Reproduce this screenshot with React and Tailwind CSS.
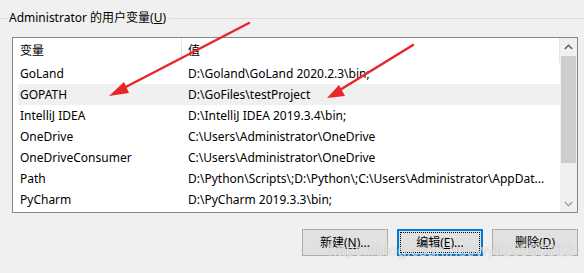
import React from "react";

const rows = [
  ["GoLand", "D:\\Goland\\GoLand 2020.2.3\\bin;"],
  ["GOPATH", "D:\\GoFiles\\testProject"],
  ["IntelliJ IDEA", "D:\\IntelliJ IDEA 2019.3.4\\bin;"],
  ["OneDrive", "C:\\Users\\Administrator\\OneDrive"],
  ["OneDriveConsumer", "C:\\Users\\Administrator\\OneDrive"],
  ["Path", "D:\\Python\\Scripts\\;D:\\Python\\;C:\\Users\\Administrator\\AppDat..."],
  ["PyCharm", "D:\\PyCharm 2019.3.3\\bin;"],
];

const font = { fontFamily: '"Segoe UI", "Noto Sans", "Noto Sans CJK SC", sans-serif' };

export default function App() {
  return (
    <div
      className="relative w-[584px] h-[273px] bg-[#f0f0f0] overflow-hidden text-[12px] text-black font-['Noto_Sans','Noto_Sans_CJK_SC',sans-serif]"
    >
      {/* group title */}
      <div className="flex items-center h-[37px] pb-[1px]">
        <div className="w-[8px] h-px bg-[#dcdcdc]" />
        <span className="leading-[16px] px-[1px]">
          Administrator 的用户变量(<span className="underline">U</span>)
        </span>
        <div className="flex-1 h-px bg-[#dcdcdc] ml-[2px]" />
      </div>

      {/* list */}
      <div className="ml-[12px] mr-[6px] h-[176px] border border-[#828790] bg-white flex">
        <div className="flex-1 flex flex-col">
          <div className="h-[25px] flex items-center border-r border-[#e5e5e5]">
            <div className="w-[169px] h-full flex items-center pl-[7px] border-r border-[#e5e5e5]">变量</div>
            <div className="pl-[6px]">值</div>
          </div>
          {rows.map(([k, v], i) => (
            <div
              key={k}
              className={
                "h-[21px] flex items-center ml-[5px] " + (i === 1 ? "bg-[#f0f0f0]" : "")
              }
            >
              <div className="w-[170px] pl-[2px] whitespace-nowrap">{k}</div>
              <div className="whitespace-nowrap">{v}</div>
            </div>
          ))}
        </div>
        {/* scrollbar */}
        <div className="w-[17px] bg-[#f0f0f0] flex flex-col">
          <div className="h-[18px] flex items-center justify-center">
            <svg width="9" height="6" viewBox="0 0 9 6">
              <path d="M0.8 5 L4.5 1.3 L8.2 5" stroke="#606060" strokeWidth="1.6" fill="none" />
            </svg>
          </div>
          <div className="h-[107px] bg-[#cdcdcd] mx-[1px]" />
          <div className="flex-1" />
          <div className="h-[17px] flex items-center justify-center">
            <svg width="9" height="6" viewBox="0 0 9 6">
              <path d="M0.8 1 L4.5 4.7 L8.2 1" stroke="#a3a3a3" strokeWidth="1.6" fill="none" />
            </svg>
          </div>
        </div>
      </div>

      {/* buttons */}
      <div className="flex justify-end gap-[9px] mr-[6px] mt-[16px]">
        <button className="w-[86px] h-[27px] bg-[#e1e1e1] border border-[#adadad]">
          新建(<span className="underline">N</span>)...
        </button>
        <button className="w-[86px] h-[27px] bg-[#e1e1e1] border-2 border-[#0078d7] p-[1px]">
          <div className="w-full h-full border border-dotted border-black flex items-center justify-center">
            编辑(<span className="underline">E</span>)...
          </div>
        </button>
        <button className="w-[86px] h-[27px] bg-[#e1e1e1] border border-[#adadad]">
          删除(<span className="underline">D</span>)
        </button>
      </div>

      {/* watermark */}
      <div className="absolute left-[328px] top-[241px] text-[16px] leading-[20px] text-white/70 font-['Liberation_Sans',sans-serif] [text-shadow:0_0_1px_rgba(0,0,0,0.25)] whitespace-nowrap">
        https://blog.csdn.net/wyll19980812
      </div>

      {/* arrows */}
      <svg className="absolute inset-0 pointer-events-none" width="584" height="273">
        <line x1="249" y1="23" x2="118" y2="91" stroke="#e8262a" strokeWidth="2.5" strokeLinecap="round" />
        <polygon points="109,96 124,82 129,93" fill="#e8262a" />
        <line x1="413" y1="45" x2="335" y2="93" stroke="#e8262a" strokeWidth="2.5" strokeLinecap="round" />
        <polygon points="327,98 339,85 345,96" fill="#e8262a" />
      </svg>
    </div>
  );
}
